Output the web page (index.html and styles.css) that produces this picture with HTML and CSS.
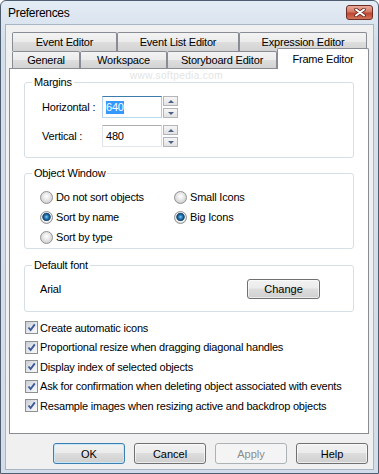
FILE: index.html
```html
<!DOCTYPE html>
<html lang="en">
<head>
    <meta charset="UTF-8">
    <title>Preferences</title>
    <link rel="stylesheet" href="styles.css">
</head>
<body>
    <div class="window">
        <div class="titlebar">
            <span class="title">Preferences</span>
            <span class="close">
                <svg width="12" height="9" viewBox="0 0 12 9">
                    <path d="M2 1.5 L10 7.5 M10 1.5 L2 7.5" stroke="#6a2b22" stroke-width="3.6" stroke-linecap="round"/>
                    <path d="M2 1.5 L10 7.5 M10 1.5 L2 7.5" stroke="#ffffff" stroke-width="2" stroke-linecap="round"/>
                </svg>
            </span>
        </div>

        <div class="client">
            <div class="tabs">
                <div class="tab-row back">
                    <div class="tab tab-event">Event Editor</div>
                    <div class="tab tab-eventlist">Event List Editor</div>
                    <div class="tab tab-expression">Expression Editor</div>
                </div>
                <div class="tab-row front">
                    <div class="tab tab-general">General</div>
                    <div class="tab tab-workspace">Workspace</div>
                    <div class="tab tab-storyboard">Storyboard Editor</div>
                    <div class="tab tab-frame active">Frame Editor</div>
                </div>
            </div>

            <div class="panel">
                <span class="watermark">www.softpedia.com</span>

                <fieldset class="group">
                    <legend>Margins</legend>
                    <div class="group-body margins">
                        <div class="field-row">
                            <span class="field-label">Horizontal :</span>
                            <div class="input focus"><span class="selected">640</span></div>
                            <div class="spin">
                                <span class="spin-btn up"></span>
                                <span class="spin-btn down"></span>
                            </div>
                        </div>
                        <div class="field-row">
                            <span class="field-label">Vertical :</span>
                            <div class="input">480</div>
                            <div class="spin">
                                <span class="spin-btn up"></span>
                                <span class="spin-btn down"></span>
                            </div>
                        </div>
                    </div>
                </fieldset>

                <fieldset class="group group-gap">
                    <legend>Object Window</legend>
                    <div class="group-body options">
                        <div class="option"><span class="radio"></span>Do not sort objects</div>
                        <div class="option"><span class="radio"></span>Small Icons</div>
                        <div class="option"><span class="radio on"></span>Sort by name</div>
                        <div class="option"><span class="radio on"></span>Big Icons</div>
                        <div class="option"><span class="radio"></span>Sort by type</div>
                    </div>
                </fieldset>

                <fieldset class="group group-gap">
                    <legend>Default font</legend>
                    <div class="group-body font-row">
                        <span>Arial</span>
                        <button type="button" class="btn btn-change">Change</button>
                    </div>
                </fieldset>

                <div class="checks">
                    <div class="check"><span class="checkbox"><svg width="11" height="11" viewBox="0 0 11 11"><path d="M2.5 5.5 L4.6 8 L8.8 2.4" fill="none" stroke="#3d5a98" stroke-width="1.9"/></svg></span>Create automatic icons</div>
                    <div class="check"><span class="checkbox"><svg width="11" height="11" viewBox="0 0 11 11"><path d="M2.5 5.5 L4.6 8 L8.8 2.4" fill="none" stroke="#3d5a98" stroke-width="1.9"/></svg></span>Proportional resize when dragging diagonal handles</div>
                    <div class="check"><span class="checkbox"><svg width="11" height="11" viewBox="0 0 11 11"><path d="M2.5 5.5 L4.6 8 L8.8 2.4" fill="none" stroke="#3d5a98" stroke-width="1.9"/></svg></span>Display index of selected objects</div>
                    <div class="check"><span class="checkbox"><svg width="11" height="11" viewBox="0 0 11 11"><path d="M2.5 5.5 L4.6 8 L8.8 2.4" fill="none" stroke="#3d5a98" stroke-width="1.9"/></svg></span>Ask for confirmation when deleting object associated with events</div>
                    <div class="check"><span class="checkbox"><svg width="11" height="11" viewBox="0 0 11 11"><path d="M2.5 5.5 L4.6 8 L8.8 2.4" fill="none" stroke="#3d5a98" stroke-width="1.9"/></svg></span>Resample images when resizing active and backdrop objects</div>
                </div>
            </div>

            <div class="actions">
                <button type="button" class="btn default">OK</button>
                <button type="button" class="btn">Cancel</button>
                <button type="button" class="btn disabled">Apply</button>
                <button type="button" class="btn">Help</button>
            </div>
        </div>
    </div>
</body>
</html>
```

FILE: styles.css
```css
* {
    margin: 0;
    padding: 0;
    box-sizing: border-box;
}

body {
    font-family: 'Liberation Sans', Arial, sans-serif;
    font-size: 11px;
    letter-spacing: -0.2px;
    color: #000;
    background: #ffffff;
}

.window {
    width: 379px;
    height: 474px;
    border: 1px solid #4e5d70;
    border-radius: 6px 6px 0 0;
    background: linear-gradient(#e4ecf5, #d4dfeb 40px, #d2dde9);
    padding: 0 4px 3px;
    display: flex;
    flex-direction: column;
}

.titlebar {
    height: 23px;
    display: flex;
    align-items: center;
    justify-content: space-between;
    padding: 0 1px 0 3px;
}

.title {
    font-size: 12px;
    letter-spacing: -0.3px;
}

.close {
    width: 27px;
    height: 15px;
    border: 1px solid #6d2d25;
    border-radius: 3px;
    background: linear-gradient(#e9aa9c, #d47a68 45%, #c0452f 55%, #d2745a);
    display: flex;
    align-items: center;
    justify-content: center;
}

.client {
    flex: 1;
    background: #f0f0f0;
    border: 1px solid #a7b5c5;
    padding: 7px 4px 5px 3px;
    display: flex;
    flex-direction: column;
}

/* tabs */
.tabs {
    margin-left: 3px;
}

.tab-row {
    display: flex;
}

.tab-row.back {
    height: 19px;
}

.tab-row.front {
    height: 17px;
    align-items: flex-end;
}

.tab {
    height: 100%;
    border: 1px solid #898c95;
    border-bottom: none;
    border-radius: 2px 2px 0 0;
    background: linear-gradient(#f3f3f3, #ebebeb 50%, #dedede 50%, #d2d2d2);
    display: flex;
    align-items: center;
    justify-content: center;
    white-space: nowrap;
}

.tab.active {
    height: 21px;
    margin-bottom: -1px;
    background: #ffffff;
    position: relative;
    z-index: 1;
}

.tab-event { width: 105px; }
.tab-eventlist { width: 122px; }
.tab-expression { width: 128px; }
.tab-general { width: 68px; }
.tab-workspace { width: 87px; }
.tab-storyboard { width: 110px; }
.tab-frame { width: 92px; }

.panel {
    height: 366px;
    background: #ffffff;
    border: 1px solid #898c95;
    padding: 6px 14px 0 14px;
    position: relative;
}

.watermark {
    position: absolute;
    top: 1px;
    left: 120px;
    font-size: 10px;
    letter-spacing: 0.4px;
    color: #e4e4e4;
}

/* group boxes */
.group {
    border: 1px solid #d5dfe5;
    border-radius: 3px;
    padding: 0;
    margin: 0;
}

.group legend {
    margin-left: 7px;
    padding: 0 2px;
    line-height: 14px;
}

.group-gap {
    margin-top: 8px;
}

.group-gap + .group-gap {
    margin-top: 9px;
}

.margins {
    display: flex;
    flex-direction: column;
    gap: 7px;
    padding: 7px 0 10px 17px;
}

.field-row {
    display: flex;
    align-items: center;
    height: 22px;
}

.field-label {
    width: 60px;
}

.input {
    width: 60px;
    height: 22px;
    border: 1px solid #abadb3;
    border-color: #abadb3 #dbdfe6 #e3e9ef #e2e3ea;
    padding-left: 3px;
    display: flex;
    align-items: center;
}

.input.focus {
    border-color: #3d7bad #a4c9e3 #b7d9ed #b5cfe7;
}

.selected {
    background: #3399ff;
    color: #ffffff;
    line-height: 13px;
}

.spin {
    margin-left: 1px;
    display: flex;
    flex-direction: column;
    gap: 2px;
}

.spin-btn {
    width: 15px;
    height: 10px;
    border: 1px solid #b2b5ba;
    background: linear-gradient(#f6f6f6, #e2e2e2);
    display: flex;
    align-items: center;
    justify-content: center;
}

.spin-btn::after {
    content: '';
    width: 0;
    height: 0;
    border-left: 3px solid transparent;
    border-right: 3px solid transparent;
}

.spin-btn.up::after {
    border-bottom: 3px solid #4d6185;
}

.spin-btn.down::after {
    border-top: 3px solid #4d6185;
}

.options {
    display: grid;
    grid-template-columns: 134px auto;
    grid-auto-rows: 20px;
    padding: 7px 0 1px 15px;
}

.option {
    display: flex;
    align-items: center;
    gap: 3px;
}

.radio {
    width: 13px;
    height: 13px;
    border-radius: 50%;
    border: 1px solid #8f9090;
    background: radial-gradient(circle at 50% 40%, #ffffff 0, #f2f2f2 2px, #d5d5d5 6px);
}

.radio.on {
    background: radial-gradient(circle at 50% 45%, #8fd3f5 0, #2f86c2 1.6px, #0f4a7c 3.4px, #4d6c86 4px, #f4f4f4 4.6px, #dadada 6px);
}

.font-row {
    display: flex;
    align-items: center;
    justify-content: space-between;
    height: 39px;
    padding: 7px 33px 12px 15px;
}

/* buttons */
.btn {
    width: 72px;
    height: 21px;
    font: inherit;
    color: #000;
    border: 1px solid #707070;
    border-radius: 3px;
    background: linear-gradient(#f2f2f2, #ebebeb 45%, #dddddd 50%, #cfcfcf);
    box-shadow: inset 0 0 0 1px rgba(255, 255, 255, 0.6);
    display: flex;
    align-items: center;
    justify-content: center;
}

.btn-change {
    width: 73px;
    height: 20px;
}

.btn.default {
    border-color: #3c7fb1;
    box-shadow: inset 0 0 0 1px #c8e8f8;
}

.btn.disabled {
    border-color: #adb2b5;
    background: #f4f4f4;
    box-shadow: none;
    color: #8d8d8d;
}

.actions {
    display: flex;
    justify-content: flex-end;
    gap: 9px;
    margin-top: 9px;
    padding-right: 1px;
}

/* checkboxes */
.checks {
    margin-top: 6px;
    display: flex;
    flex-direction: column;
}

.check {
    height: 19.5px;
    display: flex;
    align-items: center;
    padding-left: 1px;
    white-space: nowrap;
}

.checkbox {
    width: 13px;
    height: 13px;
    margin-right: 2px;
    border: 1px solid #8e8f8f;
    background: linear-gradient(135deg, #c9ced6, #eef0f3 70%, #f8f8f8);
    display: flex;
    align-items: center;
    justify-content: center;
}
```
